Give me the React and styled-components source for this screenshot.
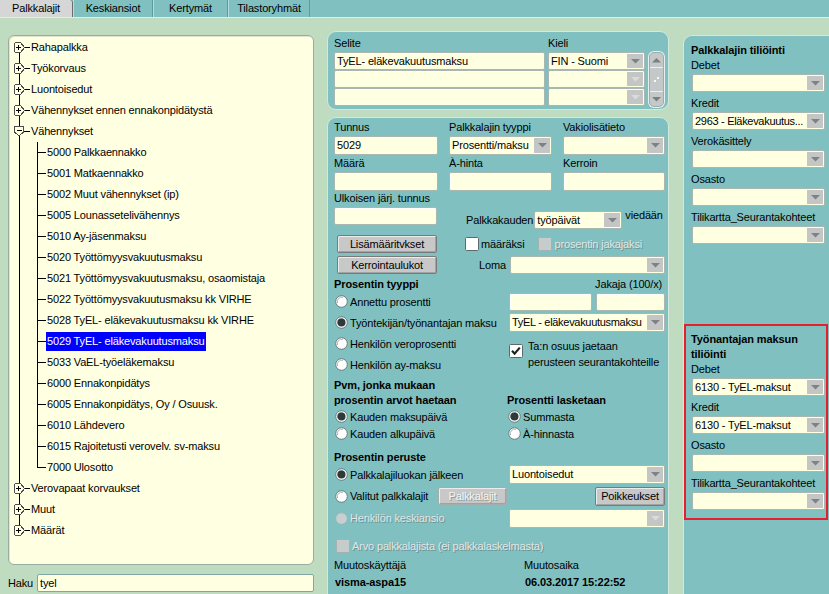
import React from 'react';
import styled, { createGlobalStyle, css } from 'styled-components';

const GlobalStyle = createGlobalStyle`
  html, body { margin: 0; padding: 0; background: #c0dcc0; }
  body {
    font-family: "Liberation Sans", Arial, sans-serif;
    font-size: 11px;
    letter-spacing: -0.15px;
    color: #000;
  }
  * { box-sizing: border-box; }
`;

const Page = styled.div`
  width: 829px;
  height: 594px;
  overflow: hidden;
  background: #c0dcc0;
  display: flex;
  flex-direction: column;
`;

/* ---------- Tabs ---------- */
const TabBar = styled.div`
  display: flex;
  flex: none;
  height: 18px;
  background: #80c0c0;
  border-bottom: 1px solid #e2f0e4;
`;
const Tab = styled.div`
  width: ${p => p.$w}px;
  height: 17px;
  line-height: 17px;
  text-align: center;
  white-space: nowrap;
  ${p => p.$active
    ? css`
      background: #d6d6d6;
      border-right: 1px solid #6c6c6c;
      border-top-right-radius: 3px;
    `
    : css`
      background: #80c0c0;
      border-left: 1px solid #b4dcdc;
      border-right: 1px solid #5a9c9c;
    `}
`;

/* ---------- Main layout ---------- */
const Main = styled.div`
  display: flex;
  align-items: flex-start;
  flex: 1;
  min-height: 0;
`;
const LeftCol = styled.div`
  width: 306px;
  margin-left: 8px;
  margin-top: 17px;
  display: flex;
  flex-direction: column;
  flex: none;
`;
const MiddleCol = styled.div`
  width: 342px;
  margin-left: 13px;
  margin-top: 13px;
  display: flex;
  flex-direction: column;
  gap: 7px;
  flex: none;
`;
const RightCol = styled.div`
  margin-left: 14px;
  margin-top: 17px;
  flex: none;
`;

/* ---------- Tree ---------- */
const TreePanel = styled.div`
  height: 530px;
  background: #ffffe1;
  border: 1px solid #98aca0;
  border-radius: 6px;
  box-shadow: inset 1px 1px 0 #e4e4d0;
  padding-top: 1px;
  overflow: hidden;
`;
const TreeRow = styled.div`
  display: flex;
  align-items: center;
  height: 21px;
  white-space: nowrap;
  svg { flex: none; display: block; }
`;
const NodeLabel = styled.span`
  padding: 0 1px;
  line-height: 19px;
  ${p => p.$selected && css`
    background: #0000ff;
    color: #fff;
  `}
`;
const HakuRow = styled.div`
  display: flex;
  align-items: center;
  margin-top: 9px;
`;
const HakuLabel = styled.span`
  width: 29px;
  flex: none;
`;
const HakuInput = styled.div`
  flex: 1;
  height: 18px;
  line-height: 16px;
  padding-left: 2px;
  background: #ffffe2;
  border: 1px solid #7ea8a2;
  border-radius: 2px;
`;

const ExpIcon = ({ open }) => open ? (
  <>
    <path d="M5.5 5.5 h9 v5.5 l-4.5 4 l-4.5 -4 z" fill="#ffffe1" stroke="#4c4c4c" />
    <path d="M7.5 9.5 h5" stroke="#000" />
  </>
) : (
  <>
    <path d="M7 5.5 h4.5 l4 5 l-4 5 H7 a1.5 1.5 0 0 1 -1.5 -1.5 v-7 a1.5 1.5 0 0 1 1.5 -1.5 z" fill="#ffffe1" stroke="#4c4c4c" />
    <path d="M6.5 10.5 h5 M9 8 v5" stroke="#000" />
  </>
);

const TopConnector = ({ open, first, last }) => (
  <svg width="21" height="21" viewBox="0 0 21 21" shapeRendering="crispEdges">
    <path d={`M10.5 ${first ? 10 : 0} V${last ? 11 : 21}`} stroke="#000" />
    <path d="M15 10.5 H21" stroke="#000" />
    <ExpIcon open={open} />
  </svg>
);

const ChildConnector = ({ last }) => (
  <svg width="37" height="21" viewBox="0 0 37 21" shapeRendering="crispEdges">
    <path d="M10.5 0 V21" stroke="#000" />
    <path d={`M28.5 0 V${last ? 11 : 21}`} stroke="#000" />
    <path d="M28.5 10.5 H37" stroke="#000" />
  </svg>
);

const topBefore = ['Rahapalkka', 'Työkorvaus', 'Luontoisedut', 'Vähennykset ennen ennakonpidätystä'];
const children = [
  '5000 Palkkaennakko',
  '5001 Matkaennakko',
  '5002 Muut vähennykset (ip)',
  '5005 Lounassetelivähennys',
  '5010 Ay-jäsenmaksu',
  '5020 Työttömyysvakuutusmaksu',
  '5021 Työttömyysvakuutusmaksu, osaomistaja',
  '5022 Työttömyysvakuutusmaksu kk VIRHE',
  '5028 TyEL- eläkevakuutusmaksu kk VIRHE',
  '5029 TyEL- eläkevakuutusmaksu',
  '5033 VaEL-työeläkemaksu',
  '6000 Ennakonpidätys',
  '6005 Ennakonpidätys, Oy / Osuusk.',
  '6010 Lähdevero',
  '6015 Rajoitetusti verovelv. sv-maksu',
  '7000 Ulosotto',
];
const topAfter = ['Verovapaat korvaukset', 'Muut', 'Määrät'];

const Tree = () => (
  <TreePanel>
    {topBefore.map((t, i) => (
      <TreeRow key={t}>
        <TopConnector first={i === 0} />
        <NodeLabel>{t}</NodeLabel>
      </TreeRow>
    ))}
    <TreeRow>
      <TopConnector open />
      <NodeLabel>Vähennykset</NodeLabel>
    </TreeRow>
    {children.map((t, i) => (
      <TreeRow key={t}>
        <ChildConnector last={i === children.length - 1} />
        <NodeLabel $selected={t.startsWith('5029')}>{t}</NodeLabel>
      </TreeRow>
    ))}
    {topAfter.map((t, i) => (
      <TreeRow key={t}>
        <TopConnector last={i === topAfter.length - 1} />
        <NodeLabel>{t}</NodeLabel>
      </TreeRow>
    ))}
  </TreePanel>
);

/* ---------- Controls ---------- */
const TextBox = styled.div`
  width: ${p => p.$w}px;
  height: ${p => p.$h || 18}px;
  line-height: ${p => (p.$h || 18) - 2}px;
  flex: none;
  padding-left: 2px;
  background: #ffffe2;
  border: 1px solid #a9b7b1;
  border-radius: 2px;
  box-shadow: inset 1px 1px 0 #ffffff;
  white-space: nowrap;
  overflow: hidden;
`;
const SelectFrame = styled.div`
  display: flex;
  align-items: stretch;
  width: ${p => p.$w}px;
  height: ${p => p.$h || 18}px;
  flex: none;
  background: #ffffe2;
  border: 1px solid #a9b7b1;
  border-radius: 2px;
  margin-left: ${p => p.$ml || 0};
`;
const SelectValue = styled.div`
  flex: 1;
  min-width: 0;
  padding-left: 2px;
  line-height: ${p => (p.$h || 18) - 2}px;
  white-space: nowrap;
  overflow: hidden;
  letter-spacing: ${p => (p.$tight ? '-0.3px' : 'inherit')};
`;
const ArrowBox = styled.div`
  width: 16px;
  flex: none;
  margin: 1px;
  background: #c4c6c6;
  display: flex;
  align-items: center;
  justify-content: center;
`;
const Select = ({ w, h, value, disabled, ml, tight }) => (
  <SelectFrame $w={w} $h={h} $ml={ml}>
    <SelectValue $h={h} $tight={tight}>{value}</SelectValue>
    <ArrowBox>
      <svg width="9" height="5" viewBox="0 0 9 5">
        <path d="M0 0 H9 L4.5 4.5 z" fill={disabled ? '#dadcdc' : '#7e8282'} />
      </svg>
    </ArrowBox>
  </SelectFrame>
);

const Btn = styled.div`
  width: ${p => p.$w}px;
  height: ${p => p.$h || 18}px;
  line-height: ${p => (p.$h || 18) - 2}px;
  flex: none;
  text-align: center;
  white-space: nowrap;
  background: #c8c8c8;
  border: 1px solid #7a7a7a;
  border-radius: 2px;
  box-shadow: inset 1px 1px 0 #ececec, inset -1px -1px 0 #a2a2a2;
  margin-left: ${p => p.$ml || 0};
  ${p => p.$disabled && css`
    color: #f4f4f4;
    border-color: #a4aeae;
    text-shadow: 1px 1px 0 #8c9c9c;
  `}
`;

const Disabled = styled.span`
  color: #e2e6e6;
  text-shadow: 1px 1px 0 #6e9090;
`;

const Radio = ({ checked, disabled }) => (
  <svg width="13" height="13" viewBox="0 0 13 13">
    <circle cx="6.5" cy="6.5" r="5.8" fill={disabled ? '#c6d0d0' : '#ffffff'} stroke={disabled ? '#a2b4b4' : '#6c7c7c'} strokeWidth="1" />
    {!disabled && <path d="M2.5 8 A4.5 4.5 0 0 1 8 2.3" fill="none" stroke="#a8b4b4" strokeWidth="1" />}
    {checked && <circle cx="6.5" cy="6.5" r="4" fill="#2e3a3a" />}
  </svg>
);

const Check = ({ checked, disabled }) => (
  <svg width="14" height="14" viewBox="0 0 14 14">
    <rect x="0.5" y="0.5" width="13" height="13" rx="1" fill={disabled ? '#c6cccc' : '#ffffff'} stroke={disabled ? '#a6b2b2' : '#5c6a6a'} />
    {checked && <path d="M3 6.8 L5.6 9.6 L10.8 3.6" fill="none" stroke="#1c2424" strokeWidth="2.2" />}
  </svg>
);

const ChoiceItem = styled.div`
  display: flex;
  align-items: center;
  gap: ${p => p.$gap ?? 2}px;
  margin-left: ${p => p.$ml || 0}px;
  white-space: nowrap;
  width: ${p => (p.$w ? `${p.$w}px` : 'auto')};
  flex: none;
  svg { flex: none; display: block; }
`;

const Label = styled.div`
  line-height: 14px;
  white-space: nowrap;
`;
const Bold = styled.div`
  font-weight: bold;
  letter-spacing: -0.1px;
  line-height: ${p => p.$lh || 14}px;
  white-space: nowrap;
`;

/* ---------- Panels ---------- */
const Panel = styled.div`
  background: #80c0c0;
  border: 1px solid #d2eadc;
  border-radius: 9px;
`;
const SelitePanel = styled(Panel)`
  height: 79px;
  padding: 4px 3px 0 6px;
  display: flex;
  align-items: flex-start;
`;
const Column = styled.div`
  display: flex;
  flex-direction: column;
  margin-left: ${p => p.$ml || 0}px;
  width: ${p => (p.$w ? `${p.$w}px` : 'auto')};
  flex: none;
`;
const LabelGap = styled.div`
  height: 2px;
`;
const ScrollTrack = styled.div`
  width: 15px;
  height: 55px;
  margin-top: 16px;
  margin-left: 4px;
  background: #c4c8c8;
  border: 1px solid #9eacaa;
  border-radius: 5px;
  box-shadow: 0 0 0 1px #e6f0ee;
  display: flex;
  flex-direction: column;
  overflow: hidden;
`;
const ScrollBtn = styled.div`
  height: 15px;
  flex: none;
  display: flex;
  align-items: center;
  justify-content: center;
  border-${p => (p.$up ? 'bottom' : 'top')}: 1px solid #eaf0f0;
`;
const ScrollMid = styled.div`
  flex: 1;
  display: flex;
  align-items: center;
  justify-content: center;
`;

const FormPanel = styled(Panel)`
  height: 490px;
  padding: 2px 3px 0 6px;
  display: flex;
  flex-direction: column;
`;
const Grid3 = styled.div`
  display: grid;
  grid-template-columns: 104px 103px 102px;
  column-gap: 11px;
  row-gap: 1px;
`;
const Field = styled.div`
  display: flex;
  flex-direction: column;
  gap: 2px;
  width: ${p => (p.$w ? `${p.$w}px` : 'auto')};
  flex: none;
`;
const Row = styled.div`
  display: flex;
  align-items: ${p => p.$align || 'center'};
  height: ${p => (p.$h ? `${p.$h}px` : 'auto')};
  margin-top: ${p => p.$mt || 0}px;
  justify-content: ${p => p.$justify || 'flex-start'};
  white-space: nowrap;
`;
const KaudenGroup = styled.div`
  display: flex;
  align-items: flex-start;
  margin-left: 29px;
  margin-top: 20px;
`;
const KaudenText = styled.span`
  line-height: 18px;
  margin-right: 1px;
`;
const Viedaan = styled.span`
  line-height: 12px;
  margin-top: -2px;
  margin-left: 3px;
`;
const LomaGroup = styled.div`
  display: flex;
  align-items: center;
  margin-left: auto;
  gap: 4px;
`;
const TwoColGrid = styled.div`
  display: grid;
  grid-template-columns: ${p => p.$cols};
  grid-auto-rows: ${p => p.$rows || 'auto'};
  margin-top: ${p => p.$mt || 0}px;
  align-items: center;
`;
const GridCell = styled.div`
  grid-column: ${p => p.$col};
  grid-row: ${p => p.$row};
  display: flex;
  align-items: center;
  min-width: 0;
`;
const InputPair = styled.div`
  display: flex;
  gap: 4px;
`;
const CheckArea = styled.div`
  grid-column: 2;
  grid-row: 3 / span 2;
  align-self: start;
  display: flex;
  align-items: flex-start;
  padding-top: 5px;
  svg { flex: none; margin-top: 6px; display: block; }
`;
const CheckText = styled.div`
  margin-left: 5px;
  line-height: 16px;
  white-space: nowrap;
`;
const Cell = styled.div`
  padding-left: ${p => p.$pl || 0}px;
  height: ${p => (p.$h ? `${p.$h}px` : 'auto')};
  display: flex;
  align-items: center;
`;

/* ---------- Right panel ---------- */
const RightPanel = styled.div`
  width: 150px;
  height: 600px;
  background: #80c0c0;
  border: 1px solid #d2eadc;
  border-right: none;
  border-radius: 9px 0 0 0;
  padding-top: 7px;
`;
const RightSection = styled.div`
  padding-left: 7px;
  display: flex;
  flex-direction: column;
`;
const SectionTitle = styled(Bold)`
  margin-bottom: 1px;
`;
const AcctField = styled.div`
  display: flex;
  flex-direction: column;
  margin-bottom: 4px;
  > :last-child { margin-top: 2px; margin-left: 1px; }
`;
const RedBox = styled.div`
  width: 144px;
  margin-top: 76px;
  border: 2px solid #e3202b;
  padding: 6px 0 4px 5px;
  display: flex;
  flex-direction: column;
`;

const Acct = ({ label, value, tight }) => (
  <AcctField>
    <Label>{label}</Label>
    <Select w={133} h={18} value={value} tight={tight} />
  </AcctField>
);

export default function App() {
  return (
    <>
      <GlobalStyle />
      <Page>
        <TabBar>
          <Tab $w={73} $active>Palkkalajit</Tab>
          <Tab $w={80}>Keskiansiot</Tab>
          <Tab $w={75}>Kertymät</Tab>
          <Tab $w={82}>Tilastoryhmät</Tab>
        </TabBar>
        <Main>
          <LeftCol>
            <Tree />
            <HakuRow>
              <HakuLabel>Haku</HakuLabel>
              <HakuInput>tyel</HakuInput>
            </HakuRow>
          </LeftCol>

          <MiddleCol>
            <SelitePanel>
              <Column $w={211}>
                <Label>Selite</Label>
                <LabelGap />
                <TextBox $w={211}>TyEL- eläkevakuutusmaksu</TextBox>
                <TextBox $w={211} />
                <TextBox $w={211} />
              </Column>
              <Column $ml={3} $w={97}>
                <Label>Kieli</Label>
                <LabelGap />
                <Select w={97} value="FIN - Suomi" />
                <Select w={97} disabled />
                <Select w={97} disabled />
              </Column>
              <ScrollTrack>
                <ScrollBtn $up>
                  <svg width="9" height="5" viewBox="0 0 9 5"><path d="M0 4.5 H9 L4.5 0 z" fill="#7a8080" /></svg>
                </ScrollBtn>
                <ScrollMid>
                  <svg width="7" height="7" viewBox="0 0 7 7">
                    <rect x="4" y="1" width="2" height="2" fill="#f4f8f8" />
                    <rect x="1" y="4" width="2" height="2" fill="#f4f8f8" />
                  </svg>
                </ScrollMid>
                <ScrollBtn>
                  <svg width="9" height="5" viewBox="0 0 9 5"><path d="M0 0 H9 L4.5 4.5 z" fill="#7a8080" /></svg>
                </ScrollBtn>
              </ScrollTrack>
            </SelitePanel>

            <FormPanel>
              <Grid3>
                <Field>
                  <Label>Tunnus</Label>
                  <TextBox $w={104} $h={19}>5029</TextBox>
                </Field>
                <Field>
                  <Label>Palkkalajin tyyppi</Label>
                  <Select w={103} h={19} value="Prosentti/maksu" />
                </Field>
                <Field>
                  <Label>Vakiolisätieto</Label>
                  <Select w={102} h={19} />
                </Field>
                <Field>
                  <Label>Määrä</Label>
                  <TextBox $w={104} $h={19} />
                </Field>
                <Field>
                  <Label>À-hinta</Label>
                  <TextBox $w={103} $h={19} />
                </Field>
                <Field>
                  <Label>Kerroin</Label>
                  <TextBox $w={102} $h={19} />
                </Field>
              </Grid3>

              <Row $align="flex-start" $h={38}>
                <Field $w={103}>
                  <Label>Ulkoisen järj. tunnus</Label>
                  <TextBox $w={103} />
                </Field>
                <KaudenGroup>
                  <KaudenText>Palkkakauden</KaudenText>
                  <Select w={88} value="työpäivät" />
                  <Viedaan>viedään</Viedaan>
                </KaudenGroup>
              </Row>

              <Row $h={18} $mt={6}>
                <Btn $w={100} $ml="3px">Lisämääritvkset</Btn>
                <ChoiceItem $ml={28}>
                  <Check />
                  <span>määräksi</span>
                </ChoiceItem>
                <ChoiceItem $ml={14}>
                  <Check disabled />
                  <Disabled>prosentin jakajaksi</Disabled>
                </ChoiceItem>
              </Row>

              <Row $h={18} $mt={3}>
                <Btn $w={100} $ml="3px">Kerrointaulukot</Btn>
                <LomaGroup>
                  <span>Loma</span>
                  <Select w={155} />
                </LomaGroup>
              </Row>

              <Row $h={14} $mt={3} $justify="space-between">
                <Bold>Prosentin tyyppi</Bold>
                <span>Jakaja (100/x)&nbsp;</span>
              </Row>

              <TwoColGrid $cols="175px 156px" $rows="21px">
                <GridCell $col={1} $row={1}>
                  <ChoiceItem $ml={1}><Radio /><span>Annettu prosentti</span></ChoiceItem>
                </GridCell>
                <GridCell $col={2} $row={1}>
                  <InputPair>
                    <TextBox $w={83} />
                    <TextBox $w={69} />
                  </InputPair>
                </GridCell>
                <GridCell $col={1} $row={2}>
                  <ChoiceItem $ml={1}><Radio checked /><span>Työntekijän/työnantajan maksu</span></ChoiceItem>
                </GridCell>
                <GridCell $col={2} $row={2}>
                  <Select w={156} h={19} tight value="TyEL - eläkevakuutusmaksu" />
                </GridCell>
                <GridCell $col={1} $row={3}>
                  <ChoiceItem $ml={1}><Radio /><span>Henkilön veroprosentti</span></ChoiceItem>
                </GridCell>
                <GridCell $col={1} $row={4}>
                  <ChoiceItem $ml={1}><Radio /><span>Henkilön ay-maksu</span></ChoiceItem>
                </GridCell>
                <CheckArea>
                  <Check checked />
                  <CheckText>Ta:n osuus jaetaan<br />perusteen seurantakohteille</CheckText>
                </CheckArea>
              </TwoColGrid>

              <TwoColGrid $cols="173px 1fr" $mt={3}>
                <Bold $lh={15}>Pvm, jonka mukaan</Bold>
                <div />
                <Bold $lh={15}>prosentin arvot haetaan</Bold>
                <Bold $lh={15}>Prosentti lasketaan</Bold>
                <Cell $h={17}><ChoiceItem $ml={1}><Radio checked /><span>Kauden maksupäivä</span></ChoiceItem></Cell>
                <Cell $h={17}><ChoiceItem $ml={1}><Radio checked /><span>Summasta</span></ChoiceItem></Cell>
                <Cell $h={17}><ChoiceItem $ml={1}><Radio /><span>Kauden alkupäivä</span></ChoiceItem></Cell>
                <Cell $h={17}><ChoiceItem $ml={1}><Radio /><span>À-hinnasta</span></ChoiceItem></Cell>
              </TwoColGrid>

              <Row $mt={8}>
                <Bold>Prosentin peruste</Bold>
              </Row>
              <Row $h={21}>
                <ChoiceItem $ml={1}><Radio checked /><span>Palkkalajiluokan jälkeen</span></ChoiceItem>
                <Select w={156} h={19} ml="auto" value="Luontoisedut" />
              </Row>
              <Row $h={22}>
                <ChoiceItem $ml={1} $w={103}><Radio /><span>Valitut palkkalajit</span></ChoiceItem>
                <Btn $w={69} $disabled>Palkkalajit</Btn>
                <Btn $w={70} $h={19} $ml="auto">Poikkeukset</Btn>
              </Row>
              <Row $h={22}>
                <ChoiceItem $ml={1}><Radio disabled /><Disabled>Henkilön keskiansio</Disabled></ChoiceItem>
                <Select w={156} h={19} ml="auto" disabled />
              </Row>
              <Row $h={16} $mt={9}>
                <ChoiceItem $ml={2} $gap={2}><Check disabled /><Disabled>Arvo palkkalajista (ei palkkalaskelmasta)</Disabled></ChoiceItem>
              </Row>

              <TwoColGrid $cols="190px 1fr" $mt={4}>
                <Label>Muutoskäyttäjä</Label>
                <Label>Muutosaika</Label>
              </TwoColGrid>
              <TwoColGrid $cols="190px 1fr" $mt={3}>
                <Cell $pl={1}><Bold>visma-aspa15</Bold></Cell>
                <Cell $pl={1}><Bold>06.03.2017 15:22:52</Bold></Cell>
              </TwoColGrid>
            </FormPanel>
          </MiddleCol>

          <RightCol>
            <RightPanel>
              <RightSection>
                <SectionTitle>Palkkalajin tiliöinti</SectionTitle>
                <Acct label="Debet" />
                <Acct label="Kredit" value="2963 - Eläkevakuutus..." tight />
                <Acct label="Verokäsittely" />
                <Acct label="Osasto" />
                <Acct label="Tilikartta_Seurantakohteet" />
              </RightSection>
              <RedBox>
                <Bold $lh={15}>Työnantajan maksun</Bold>
                <Bold $lh={15}>tiliöinti</Bold>
                <Acct label="Debet" value="6130 - TyEL-maksut" />
                <Acct label="Kredit" value="6130 - TyEL-maksut" />
                <Acct label="Osasto" />
                <Acct label="Tilikartta_Seurantakohteet" />
              </RedBox>
            </RightPanel>
          </RightCol>
        </Main>
      </Page>
    </>
  );
}
